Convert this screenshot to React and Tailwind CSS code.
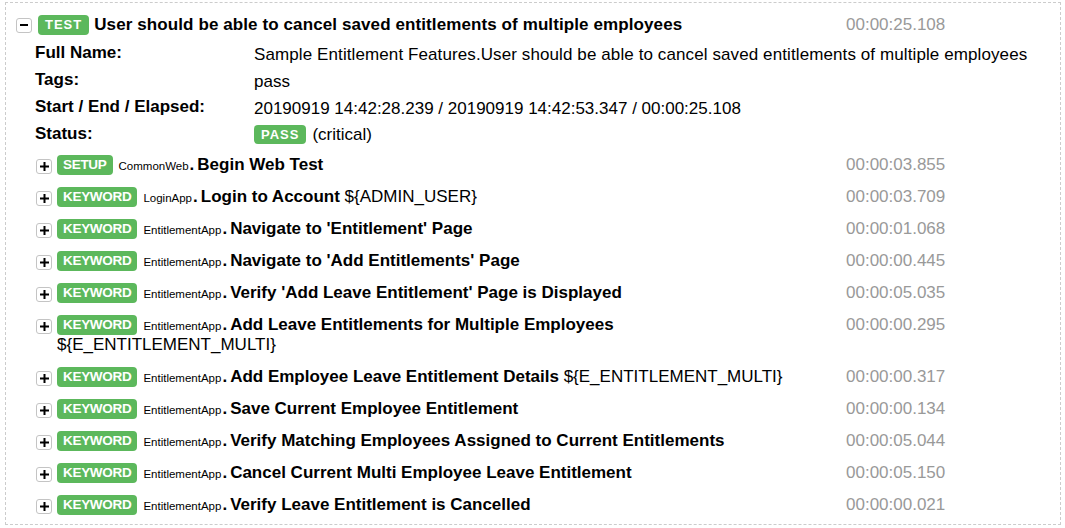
import React from "react";

const keywords = [
  { type: "SETUP", lib: "CommonWeb", name: "Begin Web Test", args: "", time: "00:00:03.855" },
  { type: "KEYWORD", lib: "LoginApp", name: "Login to Account", args: "${ADMIN_USER}", time: "00:00:03.709" },
  { type: "KEYWORD", lib: "EntitlementApp", name: "Navigate to 'Entitlement' Page", args: "", time: "00:00:01.068" },
  { type: "KEYWORD", lib: "EntitlementApp", name: "Navigate to 'Add Entitlements' Page", args: "", time: "00:00:00.445" },
  { type: "KEYWORD", lib: "EntitlementApp", name: "Verify 'Add Leave Entitlement' Page is Displayed", args: "", time: "00:00:05.035" },
  { type: "KEYWORD", lib: "EntitlementApp", name: "Add Leave Entitlements for Multiple Employees", args: "${E_ENTITLEMENT_MULTI}", time: "00:00:00.295" },
  { type: "KEYWORD", lib: "EntitlementApp", name: "Add Employee Leave Entitlement Details", args: "${E_ENTITLEMENT_MULTI}", time: "00:00:00.317" },
  { type: "KEYWORD", lib: "EntitlementApp", name: "Save Current Employee Entitlement", args: "", time: "00:00:00.134" },
  { type: "KEYWORD", lib: "EntitlementApp", name: "Verify Matching Employees Assigned to Current Entitlements", args: "", time: "00:00:05.044" },
  { type: "KEYWORD", lib: "EntitlementApp", name: "Cancel Current Multi Employee Leave Entitlement", args: "", time: "00:00:05.150" },
  { type: "KEYWORD", lib: "EntitlementApp", name: "Verify Leave Entitlement is Cancelled", args: "", time: "00:00:00.021" },
];

const Toggle = ({ open }) => (
  <div className="w-[16px] h-[15px] shrink-0 rounded-[3px] border border-[#c4c4c4] bg-white flex items-center justify-center">
    {open ? (
      <svg width="8" height="2" viewBox="0 0 8 2">
        <rect width="8" height="2" fill="#000" />
      </svg>
    ) : (
      <svg width="9" height="9" viewBox="0 0 9 9">
        <rect x="0" y="3.5" width="9" height="2" fill="#000" />
        <rect x="3.5" y="0" width="2" height="9" fill="#000" />
      </svg>
    )}
  </div>
);

export default function App() {
  return (
    <div className="min-h-screen bg-white pt-[2px] pl-[5px] font-['Liberation_Sans',Arial,sans-serif] text-black">
      <div className="w-[1056px] h-[523px] border border-dashed border-[#ccc] pt-[12px] pl-[10px]">
        {/* Test header */}
        <div className="flex items-center h-[20px]">
          <div className="flex-1 flex items-center min-w-0">
            <Toggle open />
            <span className="ml-[6px] inline-block h-[20px] leading-[20px] rounded-[4px] bg-[#5cb85c] text-white font-bold text-[13px] tracking-[1px] px-[7px]">
              TEST
            </span>
            <span className="ml-[5px] font-bold text-[17px] leading-[20px] tracking-[0.1px]">
              User should be able to cancel saved entitlements of multiple employees
            </span>
          </div>
          <div className="w-[214px] shrink-0 text-[17px] leading-[20px] text-[#999]">00:00:25.108</div>
        </div>

        {/* Metadata */}
        <div className="ml-[19px] mt-[4px] grid grid-cols-[219px_1fr] auto-rows-[27px] text-[17px] leading-[27px]">
          <div className="font-bold">Full Name:</div>
          <div className="pt-[2px] whitespace-nowrap tracking-[0.1px]">
            Sample Entitlement Features.User should be able to cancel saved entitlements of multiple employees
          </div>
          <div className="font-bold">Tags:</div>
          <div className="pt-[2px]">pass</div>
          <div className="font-bold">Start / End / Elapsed:</div>
          <div className="pt-[2px]">20190919 14:42:28.239 / 20190919 14:42:53.347 / 00:00:25.108</div>
          <div className="font-bold">Status:</div>
          <div className="pt-[2px] flex items-center">
            <span className="inline-block h-[19px] leading-[19px] rounded-[4px] bg-[#5cb85c] text-white font-bold text-[13px] tracking-[1px] px-[7px]">
              PASS
            </span>
            <span className="ml-[6px]">(critical)</span>
          </div>
        </div>

        {/* Keywords */}
        <div className="mt-[8px] pl-[20px] flex flex-col gap-[12px]">
          {keywords.map((k, i) => (
            <div key={i} className="flex items-start">
              <div className="flex-1 flex items-start min-w-0 pr-[14px]">
                <div className="mt-[4px]">
                  <Toggle />
                </div>
                <div className="ml-[5px] flex-1 text-[17px] leading-[20px]">
                  <span className="inline-block align-top h-[20px] leading-[20px] rounded-[4px] bg-[#5cb85c] text-white font-bold text-[13.5px] tracking-[-0.3px] px-[6px] mr-[6px]">
                    {k.type}
                  </span>
                  <span className="text-[11.5px] leading-none">{k.lib}</span>
                  <span className="font-bold ml-[1px] mr-[3px]">.</span>
                  <span className="font-bold">{k.name}</span>
                  {k.args && <span> {k.args}</span>}
                </div>
              </div>
              <div className="w-[214px] shrink-0 text-[17px] leading-[20px] text-[#999]">{k.time}</div>
            </div>
          ))}
        </div>
      </div>
    </div>
  );
}
